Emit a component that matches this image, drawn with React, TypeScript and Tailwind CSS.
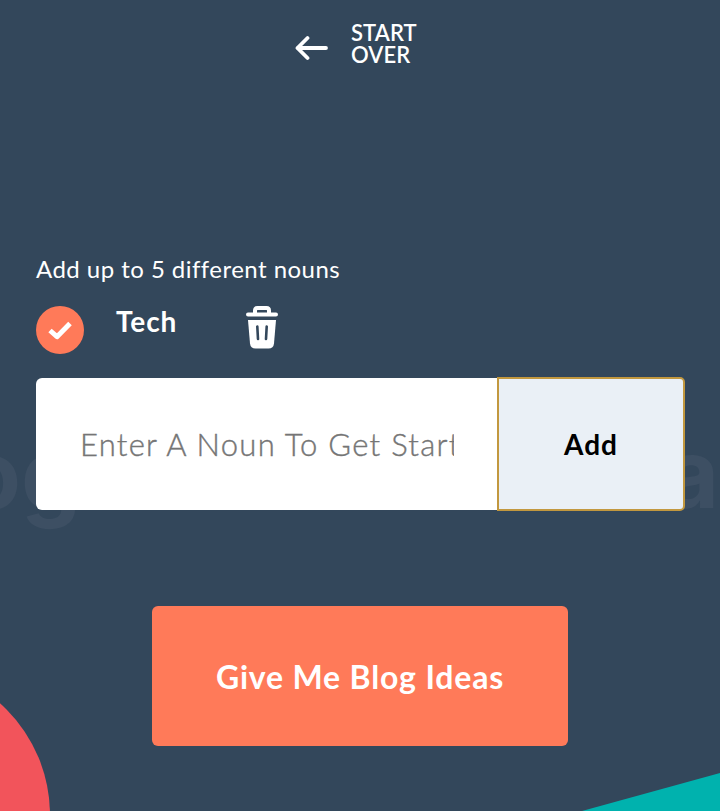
export default function App() {
  return (
    <div className="relative h-[811px] w-[720px] overflow-hidden bg-[#33475b] font-['Lato','Liberation_Sans',sans-serif] text-white">
      <div aria-hidden="true" className="absolute inset-0 font-['Inter',sans-serif] text-[95px] leading-[112px] font-bold text-[#3d4f63]">
        <span className="absolute top-[419px] right-[639px] whitespace-nowrap">og</span>
        <span className="absolute top-[418px] left-[664px] whitespace-nowrap">a</span>
      </div>
      <div className="absolute top-[665px] left-[-250px] size-[300px] rounded-full bg-[#f2545b]" />
      <svg className="absolute right-0 bottom-0" width="138" height="38" viewBox="0 0 138 38">
        <path d="M0 38 138 0V38Z" fill="#00b2ae" />
      </svg>

      <main className="relative flex h-full flex-col px-9">
        <header className="flex h-[94px] pt-[22px] pl-[259px]">
          <svg className="mt-[13px] shrink-0" width="33" height="26" viewBox="0 0 33 26" fill="none" stroke="currentColor" strokeWidth="3.8" strokeLinecap="round" strokeLinejoin="round">
            <path d="M31 13H2.5M12.5 3 2.5 13l10 10" />
          </svg>
          <a className="ml-[23px] w-[80px] text-[22px] leading-[22px] font-semibold tracking-[0.1px]">START OVER</a>
        </header>

        <p className="mt-[159px] mb-px h-[32px] text-[24px] leading-[32px] tracking-[0.46px] whitespace-nowrap">Add up to 5 different nouns</p>

        <div className="mt-5 flex h-12 items-start">
          <span className="flex size-12 items-center justify-center rounded-full bg-[#ff7a59]">
            <svg width="24" height="20" viewBox="0 0 24 20" fill="none" stroke="currentColor" strokeWidth="5">
              <path d="M2 10.5l7 6.2L22 3.500" strokeLinejoin="round" />
            </svg>
          </span>
          <span className="-mt-px ml-8 w-[130px] text-[28px] leading-[32px] font-bold tracking-[0.9px]">Tech</span>
          <svg width="32" height="43" viewBox="0 0 32 43">
            <path d="M9 7V4.5Q9 2 11.500 2H20.500Q23 2 23 4.500V7" fill="none" stroke="currentColor" strokeWidth="4" />
            <path d="M2 8.500H30" stroke="currentColor" strokeWidth="4" strokeLinecap="round" />
            <path d="M2 14H30L28 37.500Q27.500 42.500 22.500 42.500H9.500Q4.500 42.500 4 37.500Z" fill="currentColor" />
            <path d="M11.300 20.500 12 33M20.700 20.500 20 33" stroke="#33475b" strokeWidth="2.600" strokeLinecap="round" />
          </svg>
        </div>

        <div className="mt-6 flex h-[132px] w-[648px] rounded-md bg-white">
          <div className="flex w-[462px] items-center pl-11">
            <input className="w-[374px] text-[31px] font-light tracking-[1.27px] outline-none [-webkit-text-stroke:0.4px_#757575] placeholder:text-[#757575]" placeholder="Enter A Noun To Get Started" />
          </div>
          <button className="flex w-[186px] items-center justify-center rounded-r-[4px] bg-[#eaf0f6] text-[28px] font-bold tracking-[1px] text-black outline-2 outline-[#c2983f] outline-solid outline-offset-[-1px]">Add</button>
        </div>

        <button className="mt-24 h-[140px] w-[416px] self-center rounded-md bg-[#ff7a59] pt-0.5 text-[32px] font-bold tracking-[0.82px] whitespace-nowrap">Give Me Blog Ideas</button>
      </main>
    </div>
  );
}
